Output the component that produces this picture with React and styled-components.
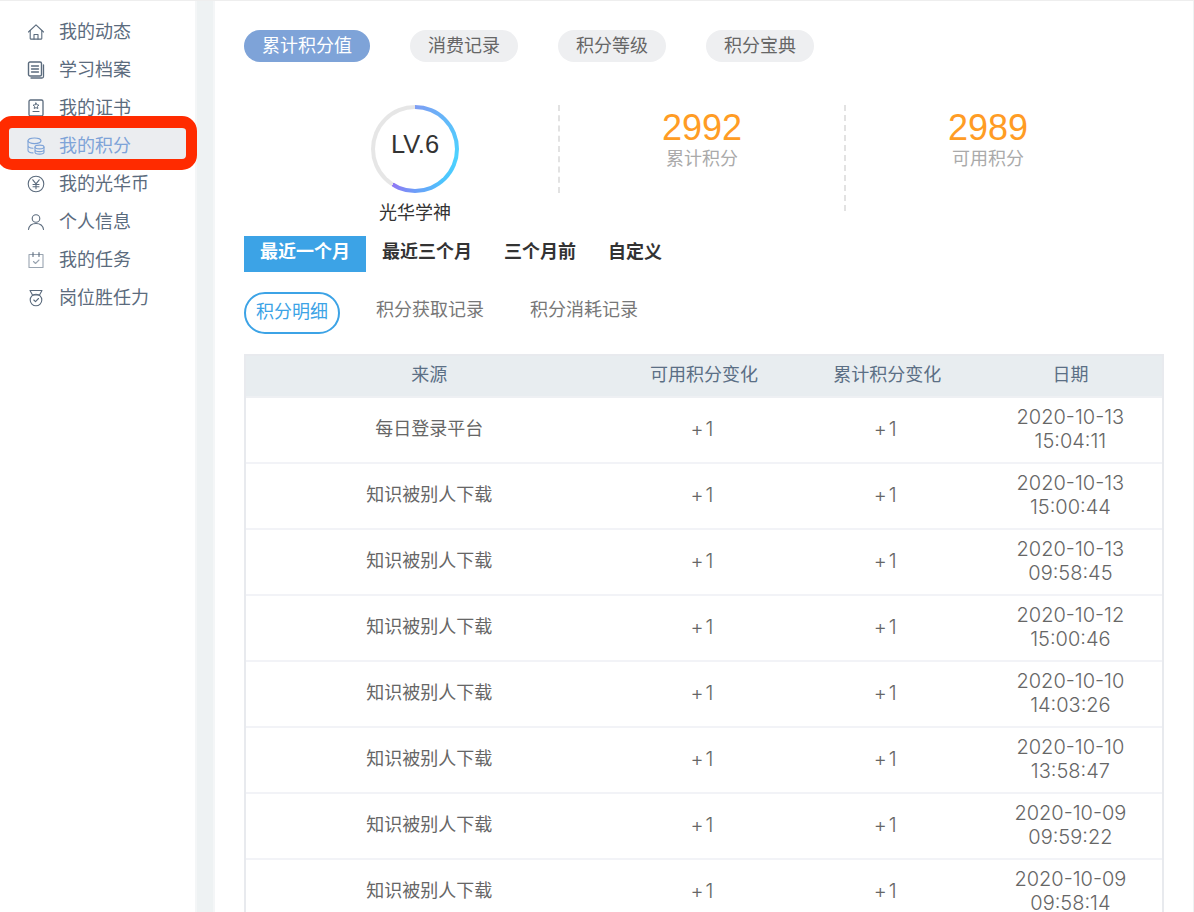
import React from "react";
import styled, { createGlobalStyle } from "styled-components";

const CJK = `"Noto Sans CJK SC", "Liberation Sans", sans-serif`;

const Global = createGlobalStyle`
  html, body { margin: 0; padding: 0; background: #eef2f3; }
  * { box-sizing: border-box; }
`;

const Page = styled.div`
  position: relative;
  width: 1194px;
  height: 912px;
  overflow: hidden;
  display: flex;
  align-items: flex-start;
  background: #eef2f3;
  font-family: ${CJK};
  font-size: 18px;
  border-top: 1px solid #eeeeee;
`;

const Sidebar = styled.nav`
  width: 197px;
  height: 100%;
  flex: none;
  padding-top: 10px;
  background: #fff;
  border-right: 2px solid #f4f6f7;
`;

const MenuItem = styled.div`
  height: 38px;
  display: flex;
  align-items: center;
  gap: 14px;
  padding-left: 27px;
  color: ${(p) => (p.$active ? "#7ea3d8" : "#5b6b7d")};
  background: ${(p) => (p.$active ? "#ebedf0" : "transparent")};
  line-height: 38px;
  svg { flex: none; width: 18px; height: 18px; margin-top: 4px; }
`;

const Callout = styled.div`
  position: absolute;
  left: -3px;
  top: 115px;
  width: 200px;
  height: 54px;
  border: solid #ff2b00;
  border-width: 12px 11px 11px 12px;
  border-radius: 15px;
`;

const Main = styled.main`
  width: 980px;
  height: 100%;
  flex: none;
  margin-left: 16px;
  padding: 29px 0 0 29px;
  background: #fff;
  border-left: 2px solid #f4f6f7;
`;

const PillRow = styled.div`
  display: flex;
  gap: 40px;
`;

const Pill = styled.div`
  height: 32px;
  line-height: 28px;
  padding: 0 18px;
  border-radius: 16px;
  color: ${(p) => (p.$active ? "#fff" : "#666")};
  background: ${(p) => (p.$active ? "#7ea3d8" : "#eeeff1")};
`;

const Summary = styled.section`
  display: flex;
  align-items: flex-start;
  margin-top: 43px;
  margin-left: 28px;
  height: 131px;
`;

const LevelCol = styled.div`
  width: 286px;
  display: flex;
  flex-direction: column;
  align-items: center;
`;

const Ring = styled.div`
  position: relative;
  width: 88px;
  height: 88px;
  border-radius: 50%;
  background: conic-gradient(
    #7f9df3 0deg,
    #5cc0fb 60deg,
    #4dd2ff 100deg,
    #4dc4fd 140deg,
    #6d9df8 180deg,
    #9078f4 212deg,
    #e6e6e6 212deg,
    #e6e6e6 360deg
  );
  display: flex;
  align-items: center;
  justify-content: center;
  &::before {
    content: "";
    position: absolute;
    inset: 4px;
    border-radius: 50%;
    background: #fff;
  }
`;

const RingLabel = styled.span`
  position: relative;
  margin-top: -9px;
  font-family: "Liberation Sans", sans-serif;
  font-size: 25.500px;
  color: #333;
`;

const LevelName = styled.div`
  margin-top: 5px;
  line-height: 26px;
  color: #333;
`;

const Divider = styled.div`
  width: 0;
  height: ${(p) => p.$h}px;
  flex: none;
  border-left: 2px dashed #e2e2e2;
`;

const Stat = styled.div`
  width: 284px;
  padding-top: 5px;
  text-align: center;
`;

const StatValue = styled.div`
  font-family: "Liberation Sans", sans-serif;
  font-size: 36px;
  line-height: 36px;
  color: #ff9c24;
`;

const StatLabel = styled.div`
  line-height: 22px;
  color: #aaa;
`;

const PeriodRow = styled.div`
  display: flex;
`;

const Period = styled.div`
  height: 36px;
  line-height: 28px;
  padding: 0 16px;
  font-weight: 700;
  color: ${(p) => (p.$active ? "#fff" : "#333")};
  background: ${(p) => (p.$active ? "#3ca3e6" : "transparent")};
`;

const SubRow = styled.div`
  display: flex;
  align-items: flex-start;
  gap: 26px;
  margin-top: 20px;
`;

const SubTab = styled.div`
  height: 42px;
  padding: 0 10px;
  line-height: 32px;
  color: ${(p) => (p.$active ? "#3ca3e6" : "#777")};
  border: ${(p) => (p.$active ? "2px solid #3ca3e6" : "none")};
  border-radius: 21px;
`;

const Table = styled.div`
  width: 920px;
  margin-top: 20px;
  border: solid #e8eaee;
  border-width: 2px 2px 0;
`;

const Row = styled.div`
  display: grid;
  grid-template-columns: 2fr 1fr 1fr 1fr;
  align-items: center;
  height: ${(p) => (p.$head ? "42px" : "66px")};
  padding-bottom: ${(p) => (p.$head ? "7px" : "6px")};
  text-align: center;
  line-height: 24px;
  color: ${(p) => (p.$head ? "#5b6f85" : "#666")};
  background: ${(p) => (p.$head ? "#e8edf0" : "#fff")};
  border-bottom: 2px solid ${(p) => (p.$head ? "#eef0f3" : "#f2f3f7")};
`;

const Num = styled.div`
  padding-top: 4px;
  font-family: Inter, "Liberation Sans", sans-serif;
  font-size: 20px;
  font-weight: 300;
`;

const Delta = styled(Num)`
  margin-left: -2px;
  letter-spacing: 2px;
`;

const S = { fill: "none", stroke: "currentColor", strokeWidth: 1.1, strokeLinecap: "round", strokeLinejoin: "round", viewBox: "0 0 18 18" };

const icons = [
  <svg {...S}><path d="M1.500 9 9 1.800 16.500 9" /><path d="M3.200 7.500V15.500a.6.6 0 0 0 .6.6H14.200a.6.6 0 0 0 .6-.6V7.500" /><path d="M7 16v-4.500h4V16" /></svg>,
  <svg {...S}><rect x="1.500" y="1" width="13" height="14" rx="1.500" strokeWidth="1.400" /><path d="M16.500 4v11.500a1.500 1.500 0 0 1-1.500 1.500H4" strokeWidth="1.300" /><path d="M4.500 5h7M4.500 8h7M4.500 11h7" strokeWidth="1.300" /></svg>,
  <svg {...S}><rect x="2" y="1" width="14" height="16" rx="1.500" strokeWidth="1.300" /><path d="m9 4 .9 1.800 2 .3-1.400 1.400.3 2L9 8.600l-1.800.9.3-2-1.400-1.400 2-.3Z" strokeWidth="1" /><path d="M6 12.500h6" /></svg>,
  <svg {...S}><ellipse cx="7.500" cy="3.800" rx="6.500" ry="2.800" /><path d="M1 3.800v9.400c0 1.400 2 2.500 5 2.700M1 8.500c0 1.400 2 2.500 5 2.700" /><ellipse cx="12.500" cy="10" rx="4.500" ry="1.900" /><path d="M8 10v5.200c0 1 2 1.900 4.500 1.900s4.500-.9 4.500-1.900V10M8 12.700c0 1 2 1.900 4.500 1.900s4.500-.9 4.500-1.900" /></svg>,
  <svg {...S}><circle cx="9" cy="9" r="7.800" /><path d="m5.800 4.800 3.200 4 3.200-4M9 8.800v5M6 9.500h6M6 11.700h6" /></svg>,
  <svg {...S}><circle cx="9" cy="5.500" r="3.800" /><path d="M1.500 16.500c.6-3.800 3.700-6 7.500-6s6.900 2.200 7.500 6" /></svg>,
  <svg {...S}><path d="M2 3.500H16V16.500H2Z" stroke="#9aa5b1" /><path d="M6 1.500v4M12 1.500v4" /><path d="m6.500 10.500 2 2 3.500-3.500" stroke="#9aa5b1" /></svg>,
  <svg {...S}><path d="M3 1.500H15L12.500 6h-7Z" /><circle cx="9" cy="11" r="5.800" /><path d="m6.800 11 1.700 1.700 3-3.200" /></svg>,
];

const menu = ["我的动态", "学习档案", "我的证书", "我的积分", "我的光华币", "个人信息", "我的任务", "岗位胜任力"];

const rows = [
  ["每日登录平台", "2020-10-13", "15:04:11"],
  ["知识被别人下载", "2020-10-13", "15:00:44"],
  ["知识被别人下载", "2020-10-13", "09:58:45"],
  ["知识被别人下载", "2020-10-12", "15:00:46"],
  ["知识被别人下载", "2020-10-10", "14:03:26"],
  ["知识被别人下载", "2020-10-10", "13:58:47"],
  ["知识被别人下载", "2020-10-09", "09:59:22"],
  ["知识被别人下载", "2020-10-09", "09:58:14"],
];

export default function App() {
  return (
    <Page>
      <Global />
      <Sidebar>
        {menu.map((m, i) => (
          <MenuItem key={m} $active={i === 3}>
            {icons[i]}
            <span>{m}</span>
          </MenuItem>
        ))}
      </Sidebar>
      <Main>
        <PillRow>
          <Pill $active>累计积分值</Pill>
          <Pill>消费记录</Pill>
          <Pill>积分等级</Pill>
          <Pill>积分宝典</Pill>
        </PillRow>
        <Summary>
          <LevelCol>
            <Ring><RingLabel>LV.6</RingLabel></Ring>
            <LevelName>光华学神</LevelName>
          </LevelCol>
          <Divider $h={88} />
          <Stat>
            <StatValue>2992</StatValue>
            <StatLabel>累计积分</StatLabel>
          </Stat>
          <Divider $h={106} />
          <Stat>
            <StatValue>2989</StatValue>
            <StatLabel>可用积分</StatLabel>
          </Stat>
        </Summary>
        <PeriodRow>
          <Period $active>最近一个月</Period>
          <Period>最近三个月</Period>
          <Period>三个月前</Period>
          <Period>自定义</Period>
        </PeriodRow>
        <SubRow>
          <SubTab $active>积分明细</SubTab>
          <SubTab>积分获取记录</SubTab>
          <SubTab>积分消耗记录</SubTab>
        </SubRow>
        <Table>
          <Row $head>
            <div>来源</div>
            <div>可用积分变化</div>
            <div>累计积分变化</div>
            <div>日期</div>
          </Row>
          {rows.map((r) => (
            <Row key={r[2]}>
              <div>{r[0]}</div>
              <Delta>+1</Delta>
              <Delta>+1</Delta>
              <Num>{r[1]}<br />{r[2]}</Num>
            </Row>
          ))}
        </Table>
      </Main>
      <Callout />
    </Page>
  );
}
